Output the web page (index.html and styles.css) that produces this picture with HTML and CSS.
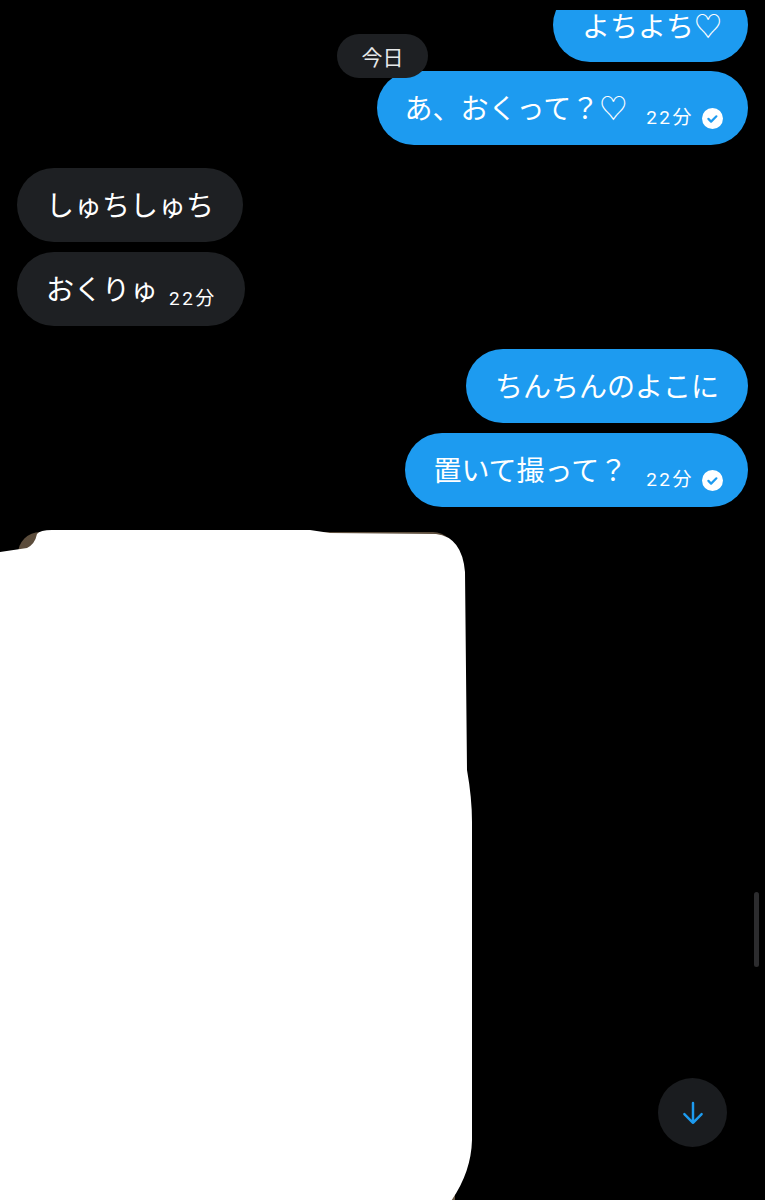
FILE: index.html
```html
<!DOCTYPE html>
<html lang="ja">
<head>
<meta charset="utf-8">
<title>DM</title>
<link rel="stylesheet" href="styles.css">
</head>
<body>
<div class="screen">
  <div class="clip">
    <div class="thread">
      <div class="group sent">
        <div class="bubble blue first"><span class="txt">よちよち♡</span></div>
        <div class="bubble blue"><span class="txt">あ、おくって？♡</span>
          <span class="meta"><span class="time">22分</span>
            <svg class="check" viewBox="0 0 21 21" width="21" height="21"><circle cx="10.5" cy="10.5" r="10.5" fill="#fff"/><path d="M6.4 10.9l2.7 2.7 5.3-5.3" fill="none" stroke="#1d9bf0" stroke-width="2.2" stroke-linecap="round" stroke-linejoin="round"/></svg>
          </span>
        </div>
      </div>
      <div class="group received">
        <div class="bubble gray"><span class="txt">しゅちしゅち</span></div>
        <div class="bubble gray"><span class="txt">おくりゅ</span><span class="meta"><span class="time">22分</span></span></div>
      </div>
      <div class="group sent">
        <div class="bubble blue"><span class="txt">ちんちんのよこに</span></div>
        <div class="bubble blue"><span class="txt">置いて撮って？</span>
          <span class="meta"><span class="time">22分</span>
            <svg class="check" viewBox="0 0 21 21" width="21" height="21"><circle cx="10.5" cy="10.5" r="10.5" fill="#fff"/><path d="M6.4 10.9l2.7 2.7 5.3-5.3" fill="none" stroke="#1d9bf0" stroke-width="2.2" stroke-linecap="round" stroke-linejoin="round"/></svg>
          </span>
        </div>
      </div>
      <div class="media">
        <svg class="redact" viewBox="0 0 475 680" width="475" height="680"><path d="M0 22 L27 18 Q35 14 37 4 Q40 0 52 0 L310 0 L330 3 L436 4 Q462 7 465 42 L467 240 Q472 268 472 292 L472 610 Q471 650 440 685 L0 685 Z" fill="#fff"/></svg>
      </div>
    </div>
  </div>
  <div class="date-pill">今日</div>
  <div class="scrollbar"></div>
  <div class="down-btn">
    <svg viewBox="0 0 24 24" width="28" height="28"><path d="M12 3.5V20.3M4.6 13 12 20.4 19.4 13" fill="none" stroke="#1d9bf0" stroke-width="2.1" stroke-linecap="round" stroke-linejoin="round"/></svg>
  </div>
</div>
</body>
</html>
```
FILE: styles.css
```css
html, body {
  margin: 0;
  padding: 0;
  background: #000;
}
body {
  font-family: "Noto Sans CJK JP", "Noto Sans", sans-serif;
  color: #fff;
}
.screen {
  position: relative;
  width: 765px;
  height: 1200px;
  overflow: hidden;
  background: #000;
}
.clip {
  margin-top: 10px;
  height: 1190px;
  overflow: hidden;
}
.thread {
  display: flex;
  flex-direction: column;
  gap: 23px;
  padding: 0 17px;
}
.group {
  display: flex;
  flex-direction: column;
  gap: 10px;
}
.group.sent { align-items: flex-end; }
.group.received { align-items: flex-start; }
.bubble {
  height: 74px;
  box-sizing: border-box;
  border-radius: 37px;
  display: flex;
  align-items: center;
  padding: 0 29px;
  font-size: 28px;
  line-height: 1.2;
}
.bubble.first {
  margin-top: -22px;
  margin-bottom: -1px;
  padding-right: 26px;
  line-height: 1;
}
.bubble.blue { background: #1d9bf0; }
.bubble.gray { background: #1e2023; }
.txt { white-space: nowrap; }
.meta {
  display: flex;
  align-items: center;
  gap: 8px;
  margin-left: 19px;
  margin-top: 18px;
}
.bubble.blue:has(.meta) { padding-left: 28px; padding-right: 25px; }
.received .meta { margin-left: 11px; }
.bubble.gray:has(.meta) { padding-right: 28px; }
.time {
  font-family: Roboto, "Noto Sans CJK JP", sans-serif;
  font-size: 19px;
  letter-spacing: 2.5px;
  line-height: 1;
  white-space: nowrap;
}
.check { display: block; margin-top: 3px; }
.media {
  position: relative;
  margin-top: 2px;
  margin-left: 1px;
  width: 437px;
  height: 700px;
  border-radius: 22px;
  background: linear-gradient(180deg, #5c4d3c 0%, #4a3d30 50%, #6a5a46 100%);
}
.redact {
  position: absolute;
  left: -18px;
  top: -2px;
  display: block;
}
.date-pill {
  position: absolute;
  left: 337px;
  top: 34px;
  height: 44px;
  width: 91px;
  border-radius: 22px;
  background: #1e2023;
  display: flex;
  align-items: center;
  justify-content: center;
  font-size: 21px;
  color: #e7e9ea;
}
.scrollbar {
  position: absolute;
  left: 754px;
  top: 892px;
  width: 5px;
  height: 75px;
  border-radius: 3px;
  background: #2c2c2e;
}
.down-btn {
  position: absolute;
  left: 658px;
  top: 1078px;
  width: 69px;
  height: 69px;
  border-radius: 50%;
  background: #1a1c1f;
  display: flex;
  align-items: center;
  justify-content: center;
}
.down-btn svg { display: block; }
```
